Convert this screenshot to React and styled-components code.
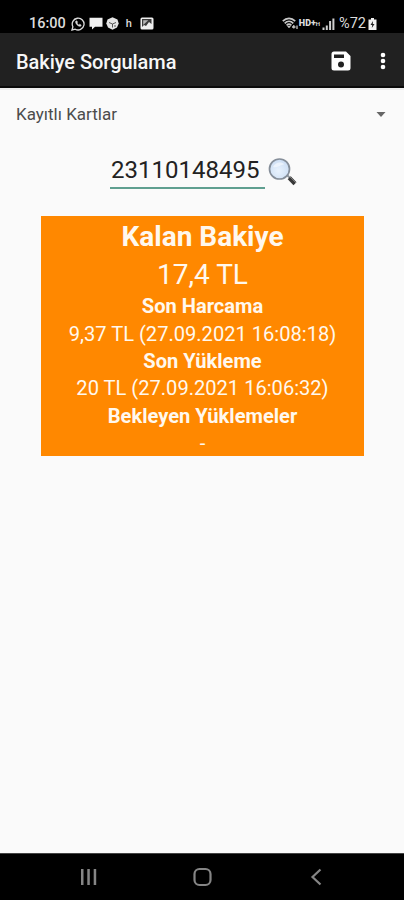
import React from 'react'
import styled, { createGlobalStyle } from 'styled-components'

const GlobalStyle = createGlobalStyle`
  * { box-sizing: border-box; }
  body {
    margin: 0;
    background: #fafafa;
    font-family: Roboto, 'Noto Sans', sans-serif;
  }
`

const Screen = styled.div`
  display: flex;
  flex-direction: column;
  width: 404px;
  height: 900px;
  background: #fafafa;
`

const StatusBar = styled.div`
  display: flex;
  justify-content: space-between;
  flex: none;
  height: 33px;
  padding: 14px 27px 0 29px;
  background: #000000;
  color: #dcdcdc;
`

const StatusGroup = styled.div`
  display: flex;
  align-items: center;
  height: 19px;
`

const StatusText = styled.span`
  margin-left: ${props => props.gap || 0}px;
  font-size: ${props => props.size}px;
  font-weight: ${props => props.weight || 400};
  line-height: 19px;
`

const Icon = styled.svg`
  display: block;
  flex: none;
  margin-left: ${props => props.$gap || 0}px;
`

const AppBar = styled.header`
  display: flex;
  align-items: center;
  flex: none;
  height: 55px;
  padding: 2px 18px 0 16px;
  background: #212121;
  border-bottom: 2px solid #0a0a0a;
`

const Title = styled.h1`
  flex: 1;
  margin: 0;
  padding-top: 2px;
  font-size: 20px;
  font-weight: 500;
  line-height: 28px;
  letter-spacing: -0.05px;
  color: #f7f7f7;
`

const IconButton = styled.button`
  display: flex;
  padding: 0;
  border: 0;
  background: none;
  margin-left: ${props => props.gap || 0}px;
`

const Content = styled.main`
  display: flex;
  flex-direction: column;
  flex: 1;
  border-top: 2px solid #eeeeee;
`

const Spinner = styled.div`
  display: flex;
  align-items: center;
  justify-content: space-between;
  height: 48px;
  padding: 0 18px 0 16px;
`

const SpinnerLabel = styled.span`
  font-size: 17px;
  line-height: 24px;
  color: #4c4c4c;
`

const SearchRow = styled.div`
  display: flex;
  align-items: flex-start;
  margin: 17px 0 0 110px;
`

const CardNumber = styled.div`
  width: 155px;
  height: 34px;
  padding-left: 1px;
  border-bottom: 2px solid #5f9f90;
  font-size: 24px;
  line-height: 30px;
  color: #222222;
`

const SearchButton = styled(IconButton)`
  margin: 2px 0 0 3px;
`

const BalanceCard = styled.section`
  flex: none;
  width: 323px;
  height: 240px;
  margin: 27px 0 0 41px;
  background: #ff8800;
  color: #fff8ee;
  text-align: center;
  white-space: nowrap;
`

const Line = styled.div`
  height: ${props => (props.large ? 37.6 : 27.35)}px;
  font-size: ${props => (props.large ? 28 : 20.1)}px;
  font-weight: ${props => (props.bold ? 700 : 400)};
  line-height: ${props => (props.large ? 41 : 31)}px;
`

const NavBar = styled.nav`
  display: flex;
  align-items: center;
  justify-content: space-between;
  flex: none;
  height: 47px;
  padding: 0 82px 0 79px;
  background: #000000;
  border-top: 1px solid #444444;
`

const lines = [
  { text: 'Kalan Bakiye', large: true, bold: true },
  { text: '17,4 TL', large: true },
  { text: 'Son Harcama', bold: true },
  { text: '9,37 TL (27.09.2021 16:08:18)' },
  { text: 'Son Yükleme', bold: true },
  { text: '20 TL (27.09.2021 16:06:32)' },
  { text: 'Bekleyen Yüklemeler', bold: true },
  { text: '-' },
]

const WhatsappIcon = () => (
  <Icon width="14" height="14" viewBox="0 0 14 14" fill="none" stroke="#dcdcdc" $gap={5}>
    <path d="M1 13l.9-3.2A5.9 5.9 0 1 1 4.2 12.2z" strokeWidth="1.3" />
    <path d="M4.7 4.2c-.9 2 2.800 6 5 5l.5-1.200-1.600-.8-.8.7c-.9-.4-1.500-1.100-1.800-1.900l.6-.7-.7-1.500z" fill="#dcdcdc" strokeWidth=".5" />
  </Icon>
)

const ChatIcon = () => (
  <Icon width="14" height="13" viewBox="0 0 14 13" fill="#f0f0f0" $gap={4}>
    <path d="M.5 .8h13v9H6l-3 2.800V9.800H.5z" />
  </Icon>
)

const PackageIcon = () => (
  <Icon width="13" height="13" viewBox="0 0 13 13" $gap={3}>
    <path d="M6.500 .3l5 2.200 1.200 4-1.700 4-4.500 2.200-4.500-2.200-1.700-4 1.200-4z" fill="#e4e4e4" />
    <path d="M3 5.500l3.500 1.500L10 5.500M6.500 7v3.500M9 8v2" fill="none" stroke="#444444" strokeWidth=".9" />
  </Icon>
)

const PictureIcon = () => (
  <Icon width="14" height="13" viewBox="0 0 14 13" $gap={8}>
    <rect x=".5" y=".5" width="13" height="12" rx="1.500" fill="#eeeeee" />
    <path d="M2 2h9.500v5L9 5l-3 4-2-1-2 2z" fill="#3a3a3a" />
    <path d="M3.200 8V3.200h5z" fill="#b5b5b5" />
  </Icon>
)

const WifiIcon = () => (
  <Icon width="17" height="13" viewBox="0 0 17 13" fill="none" stroke="#c8c8c8" strokeWidth="1.700">
    <path d="M.8 4.200C4.500.4 9.500.4 13.200 4.200M2.700 6.300c2.600-2.600 6-2.600 8.600 0M4.600 8.300c1.500-1.400 3.300-1.400 4.800 0" />
    <path d="M5.500 9h3L7 11z" fill="#c8c8c8" strokeWidth=".5" />
    <path d="M11.800 8v3.500M10 10h3.500" strokeWidth="1.300" />
    <path d="M15 8.500v3.500" strokeWidth="1.300" />
  </Icon>
)

const SignalIcon = () => (
  <Icon width="13" height="12" viewBox="0 0 13 12" fill="#cfcfcf" $gap={2}>
    <path d="M.5 9.500h2V12h-2zM3.800 7.500h2V12h-2zM7.100 3h2v9h-2zM10.400 .5h2V12h-2z" />
  </Icon>
)

const BatteryIcon = () => (
  <Icon width="9" height="12" viewBox="0 0 9 12" $gap={2}>
    <path d="M3 0h3v1.500h2.500V12h-8V1.500H3z" fill="#f0f0f0" />
    <path d="M5 3L2.500 7h1.700L3.800 10 6.500 6H4.800z" fill="#222222" />
  </Icon>
)

const SaveIcon = () => (
  <Icon width="20" height="20" viewBox="0 0 20 20">
    <path d="M3 .5h12L19.500 5v12a2.500 2.500 0 0 1-2.500 2.500H3A2.500 2.500 0 0 1 .5 17V3A2.500 2.500 0 0 1 3 .5z" fill="#ffffff" />
    <path d="M3 3.500h10v3.500H3z" fill="#212121" />
    <circle cx="10" cy="13.500" r="3" fill="#212121" />
  </Icon>
)

const MoreIcon = () => (
  <Icon width="6" height="18" viewBox="0 0 6 18" fill="#ffffff">
    <circle cx="3" cy="3" r="2.300" />
    <circle cx="3" cy="9" r="2.300" />
    <circle cx="3" cy="15" r="2.300" />
  </Icon>
)

const SearchIcon = () => (
  <Icon width="30" height="30" viewBox="0 0 30 30">
    <defs>
      <radialGradient id="lens" cx=".45" cy=".6" r=".6">
        <stop offset="0" stopColor="#e8f2fd" />
        <stop offset="1" stopColor="#cbddf3" />
      </radialGradient>
    </defs>
    <path d="M19 18l3 3" stroke="#8d949b" strokeWidth="2" />
    <path d="M21.200 20.700l5.800 6" stroke="#383838" strokeWidth="4.200" />
    <path d="M22 20l6 6" stroke="#8a8a8a" strokeWidth=".8" />
    <circle cx="11.500" cy="12" r="10" fill="url(#lens)" stroke="#858e99" strokeWidth="1.700" />
    <path d="M5 10c2-4.500 8-6 11.500-2.500-4 0-6 3.500-11.500 2.500z" fill="#f3f8fe" opacity=".7" />
  </Icon>
)

export default function App() {
  return (
    <>
      <GlobalStyle />
      <Screen>
        <StatusBar>
          <StatusGroup>
            <StatusText size={14.5} weight={500}>16:00</StatusText>
            <WhatsappIcon />
            <ChatIcon />
            <PackageIcon />
            <StatusText size={11} weight={500} gap={7}>h</StatusText>
            <PictureIcon />
          </StatusGroup>
          <StatusGroup>
            <WifiIcon />
            <StatusText size={9} weight={900}>HD+</StatusText>
            <StatusText size={6} weight={700}>H</StatusText>
            <SignalIcon />
            <StatusText size={14.5} gap={4}>%72</StatusText>
            <BatteryIcon />
          </StatusGroup>
        </StatusBar>
        <AppBar>
          <Title>Bakiye Sorgulama</Title>
          <IconButton aria-label="Kaydet">
            <SaveIcon />
          </IconButton>
          <IconButton aria-label="Menü" gap={29}>
            <MoreIcon />
          </IconButton>
        </AppBar>
        <Content>
          <Spinner>
            <SpinnerLabel>Kayıtlı Kartlar</SpinnerLabel>
            <Icon width="10" height="5" viewBox="0 0 10 5">
              <path d="M.5 0h9L5 5z" fill="#666666" />
            </Icon>
          </Spinner>
          <SearchRow>
            <CardNumber>23110148495</CardNumber>
            <SearchButton aria-label="Sorgula">
              <SearchIcon />
            </SearchButton>
          </SearchRow>
          <BalanceCard>
            {lines.map(({ text, ...rest }) => (
              <Line key={text} {...rest}>{text}</Line>
            ))}
          </BalanceCard>
        </Content>
        <NavBar>
          <Icon width="19" height="18" viewBox="0 0 19 18" fill="#858585">
            <path d="M2 1h2.500v16H2zM8.300 1h2.500v16H8.300zM14.700 1h2.500v16h-2.500z" />
          </Icon>
          <Icon width="20" height="20" viewBox="0 0 20 20">
            <rect x="1.500" y="2" width="16" height="16" rx="5" fill="none" stroke="#858585" strokeWidth="2.200" />
          </Icon>
          <Icon width="14" height="18" viewBox="0 0 14 18">
            <path d="M12.500 1.500L4.500 9l8 7.500" fill="none" stroke="#858585" strokeWidth="2.200" />
          </Icon>
        </NavBar>
      </Screen>
    </>
  )
}
